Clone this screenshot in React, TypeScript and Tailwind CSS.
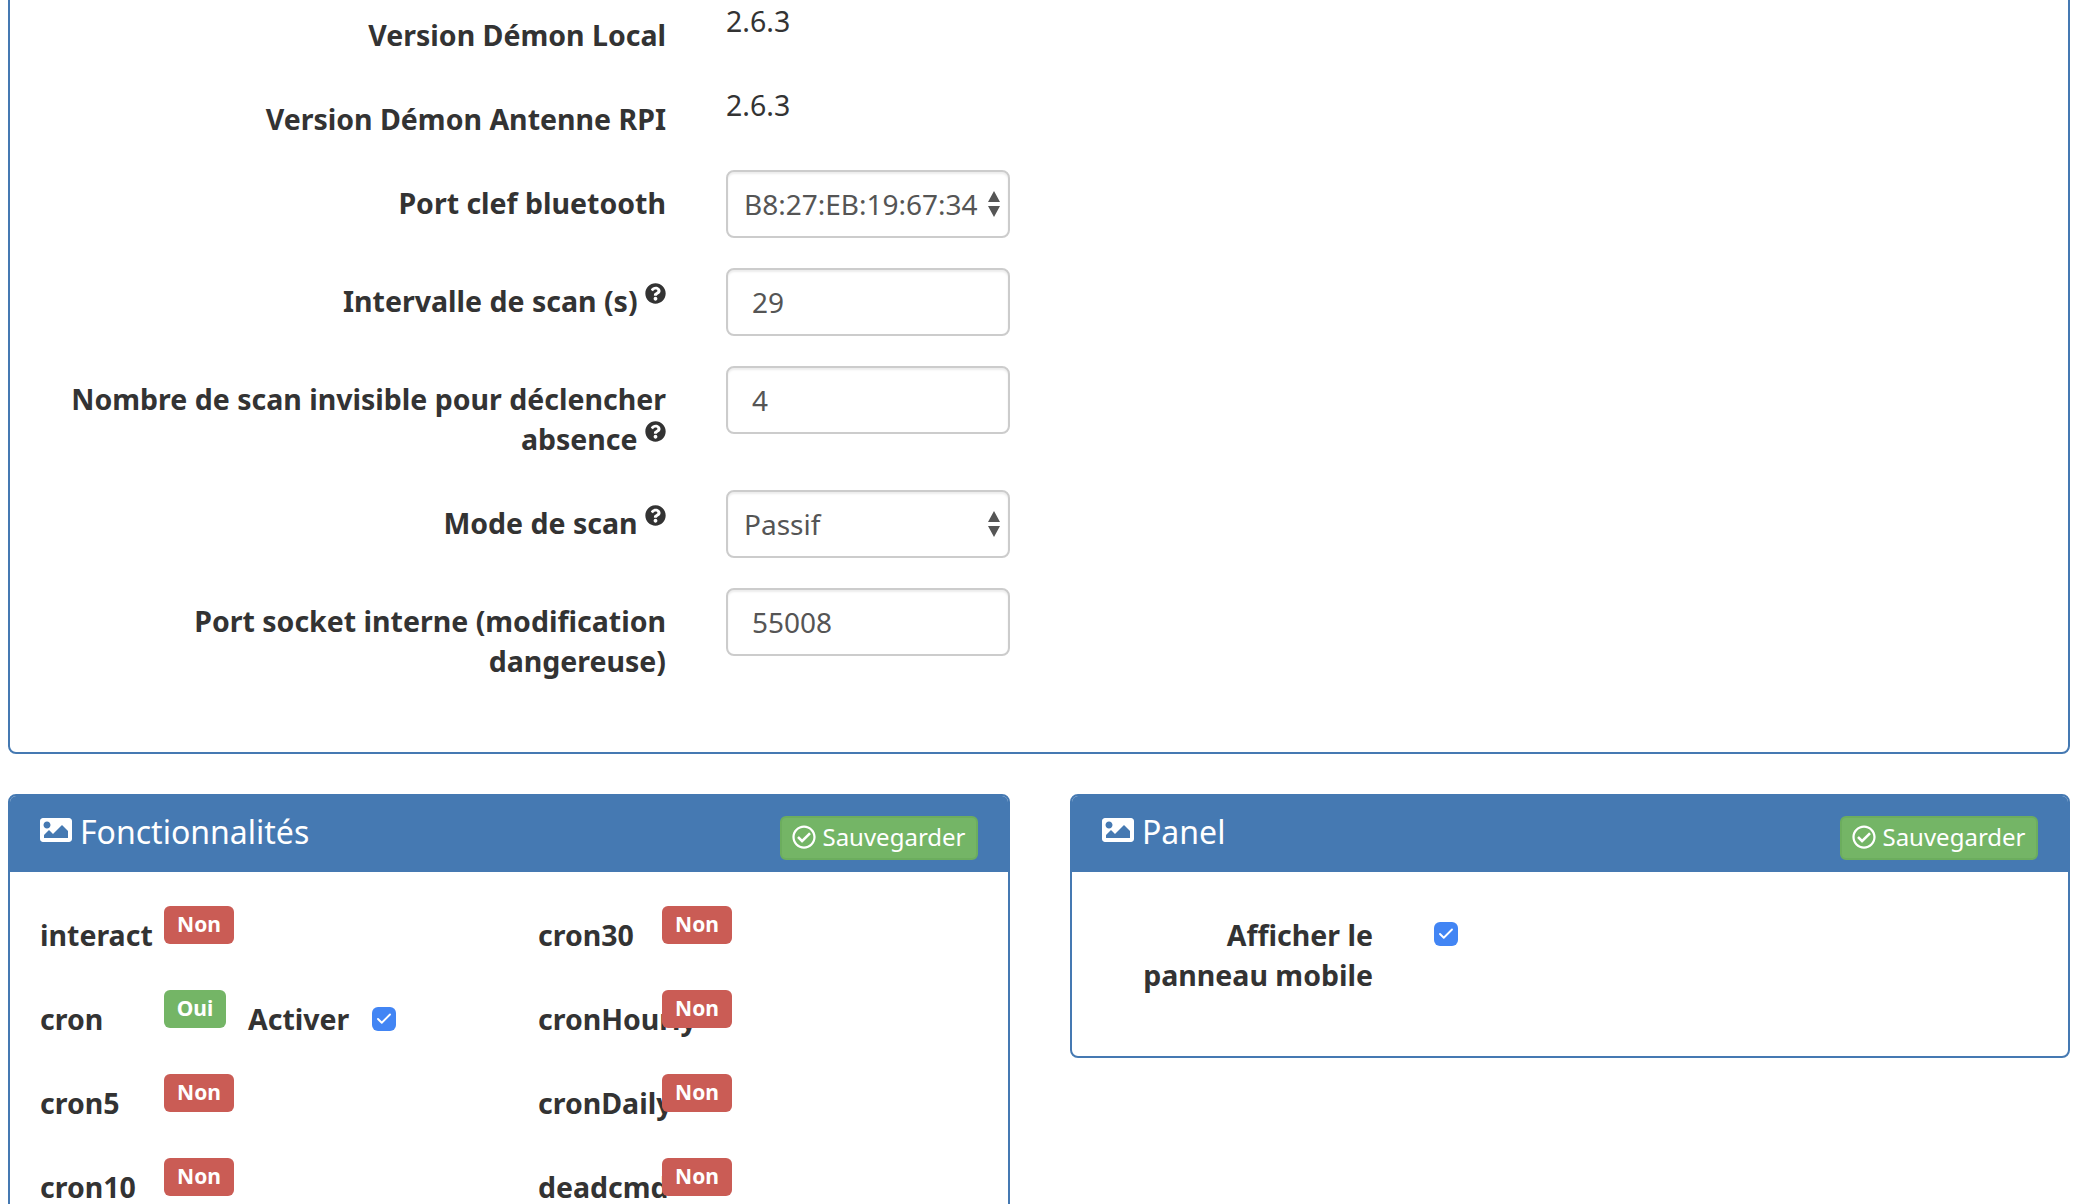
import { FaImage, FaQuestionCircle, FaRegCheckCircle } from "react-icons/fa";
import { Check } from "lucide-react";

function Help() {
  return <FaQuestionCircle className="inline align-[8px] text-[21px] text-[#333]" />;
}

function Row({ label, help, children }: { label: string; help?: boolean; children: React.ReactNode }) {
  return (
    <div className="mb-[30px] flex">
      <label className="w-[626px] shrink-0 pb-[1px] pt-[13px] text-right text-[28.5px] font-bold leading-[40px] text-[#333]">
        {label}
        {help && (
          <>
            {" "}
            <Help />
          </>
        )}
      </label>
      <div className="ml-[60px] w-[284px] shrink-0">{children}</div>
    </div>
  );
}

function TextInput({ value }: { value: string }) {
  return (
    <input
      readOnly
      defaultValue={value}
      className="h-[68px] w-full rounded-lg border-2 border-[#ccc] bg-white px-[24px] text-[28px] text-[#555] shadow-[inset_0_2px_2px_rgba(0,0,0,0.075)] outline-none"
    />
  );
}

function SelectBox({ value }: { value: string }) {
  return (
    <div className="relative h-[68px] w-full">
      <select
        defaultValue={value}
        className="h-full w-full appearance-none rounded-lg border-2 border-[#ccc] bg-white pl-[16px] text-[28px] text-[#555] shadow-[inset_0_2px_2px_rgba(0,0,0,0.075)] outline-none"
      >
        <option>{value}</option>
      </select>
      <svg viewBox="0 0 14 26" className="pointer-events-none absolute right-[9px] top-[21px] h-[26px] w-[14px] fill-[#555]">
        <path d="M7 0l6 11H1zM7 26l6-11H1z" />
      </svg>
    </div>
  );
}

function SaveButton() {
  return (
    <button className="flex h-[44px] w-[198px] items-center justify-center gap-[6px] rounded-md border-2 border-[#6cad5e] bg-[#74b566] pb-[2px] text-[24px] text-white">
      <FaRegCheckCircle className="text-[24px]" />
      Sauvegarder
    </button>
  );
}

function PanelHead({ title }: { title: string }) {
  return (
    <div className="flex h-[76px] items-start justify-between bg-[#4579b2] pl-[30px] pr-[30px] pt-[20px] text-white">
      <div className="-mt-[2px] flex items-start gap-[8px] text-[32px] leading-[36px]">
        <FaImage className="text-[32px]" />
        {title}
      </div>
      <SaveButton />
    </div>
  );
}

function Badge({ on }: { on?: boolean }) {
  return (
    <span
      className={
        on
          ? "relative z-10 mt-[4px] flex h-[38px] w-[62px] items-center justify-center rounded-md bg-[#74b566] pb-[1px] text-[21px] font-bold text-white"
          : "relative z-10 mt-[4px] flex h-[38px] w-[70px] items-center justify-center rounded-md bg-[#ca5c55] pb-[1px] text-[21px] font-bold text-white"
      }
    >
      {on ? "Oui" : "Non"}
    </span>
  );
}

function Tick() {
  return (
    <span className="flex h-[24px] w-[24px] items-center justify-center rounded-[6px] bg-[#4285f4] text-white">
      <Check size={18} strokeWidth={2.5} />
    </span>
  );
}

function Func({ name, on, children }: { name: string; on?: boolean; children?: React.ReactNode }) {
  return (
    <div className="mb-[30px] flex h-[54px] items-start">
      <span className="w-[124px] shrink-0 whitespace-nowrap pt-[13px] text-[28.5px] font-bold leading-[40px] text-[#333]">
        {name}
      </span>
      <Badge on={on} />
      {children}
    </div>
  );
}

const leftFuncs = ["interact", "cron", "cron5", "cron10"];
const rightFuncs = ["cron30", "cronHourly", "cronDaily", "deadcmd"];

export default function App() {
  return (
    <div className="h-screen overflow-hidden bg-white pl-[8px] pr-[14px] font-['Noto_Sans',sans-serif]">
      <div className="-mt-[20px] rounded-b-lg border-2 border-[#4579b2] pb-[40px] pl-[30px] pt-[20px]">
        <div className="mb-[30px] flex">
          <div className="w-[626px] shrink-0 pb-[1px] pt-[13px] text-right text-[28.5px] font-bold leading-[40px] text-[#333]">
            Version Démon Local
          </div>
          <div className="-mt-[1px] ml-[60px] text-[28.5px] leading-[40px] text-[#333]">2.6.3</div>
        </div>
        <div className="mb-[30px] flex">
          <div className="w-[626px] shrink-0 pb-[1px] pt-[13px] text-right text-[28.5px] font-bold leading-[40px] text-[#333]">
            Version Démon Antenne RPI
          </div>
          <div className="-mt-[1px] ml-[60px] text-[28.5px] leading-[40px] text-[#333]">2.6.3</div>
        </div>
        <Row label="Port clef bluetooth">
          <SelectBox value="B8:27:EB:19:67:34" />
        </Row>
        <Row label="Intervalle de scan (s)" help>
          <TextInput value="29" />
        </Row>
        <Row label="Nombre de scan invisible pour déclencher absence" help>
          <TextInput value="4" />
        </Row>
        <Row label="Mode de scan" help>
          <SelectBox value="Passif" />
        </Row>
        <Row label="Port socket interne (modification dangereuse)">
          <TextInput value="55008" />
        </Row>
      </div>

      <div className="mt-[40px] grid grid-cols-[1002px_1fr] items-start gap-[60px]">
        <div className="overflow-hidden rounded-lg border-2 border-[#4579b2]">
          <PanelHead title="Fonctionnalités" />
          <div className="grid grid-cols-[498px_1fr] pl-[30px] pt-[30px]">
            <div>
              {leftFuncs.map((name) => (
                <Func key={name} name={name} on={name === "cron"}>
                  {name === "cron" && (
                    <div className="flex items-center gap-[23px] pt-[13px]">
                      <span className="ml-[22px] text-[28.5px] font-bold leading-[40px] text-[#333]">Activer</span>
                      <Tick />
                    </div>
                  )}
                </Func>
              ))}
            </div>
            <div>
              {rightFuncs.map((name) => (
                <Func key={name} name={name} />
              ))}
            </div>
          </div>
        </div>

        <div className="overflow-hidden rounded-lg border-2 border-[#4579b2]">
          <PanelHead title="Panel" />
          <div className="flex pb-[61px] pt-[30px]">
            <div className="ml-[37px] w-[264px] pt-[13px] text-right text-[28.5px] font-bold leading-[40px] text-[#333]">
              Afficher le panneau mobile
            </div>
            <div className="ml-[61px] pt-[20px]">
              <Tick />
            </div>
          </div>
        </div>
      </div>
    </div>
  );
}
